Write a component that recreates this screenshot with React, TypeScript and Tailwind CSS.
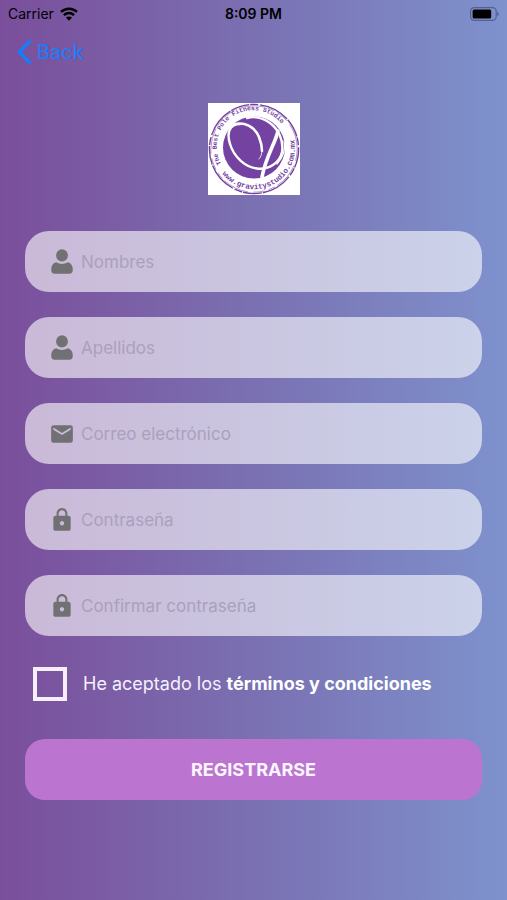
import { useState } from "react";
import type { ReactNode } from "react";
import { MdEmail, MdLock } from "react-icons/md";

function StatusBar() {
  return (
    <div className="grid h-7 grid-cols-3 items-center px-2 text-sm text-black">
      <div className="flex items-center gap-[6px]">
        <span>Carrier</span>
        <svg width="18" height="14" viewBox="0 0 18 14" fill="none" stroke="currentColor" strokeWidth="2.5">
          <path d="M1 4.9 C5.6 0.6 12.4 0.6 17 4.9" />
          <path d="M3.9 8.2 C6.9 5.4 11.1 5.4 14.1 8.2" />
          <path d="M9 13.8 L5.9 10.6 C7.7 9 10.3 9 12.1 10.6 Z" fill="currentColor" stroke="none" />
        </svg>
      </div>
      <span className="text-center font-semibold">8:09 PM</span>
      <svg className="justify-self-end" width="29" height="14" viewBox="0 0 29 14">
        <rect x="0.6" y="0.6" width="25.6" height="12.8" rx="3.6" fill="none" stroke="#56618f" strokeWidth="1.2" />
        <rect x="2.6" y="2.4" width="18.6" height="9.2" rx="1.6" fill="#000" />
        <path d="M27.2 4.8 C29.2 5.6 29.2 8.4 27.2 9.2 Z" fill="#56618f" />
      </svg>
    </div>
  );
}

function Logo() {
  return (
    <svg width="92" height="92" viewBox="0 0 92 92" role="img" aria-label="Gravity Studio">
      <defs>
        <path id="logo-top" d="M13.2 61 A36.5 36.5 0 1 1 79 29.6" />
        <path id="logo-bottom" d="M14.1 70.8 A41 41 0 0 0 81.5 24.5" />
      </defs>
      <rect width="92" height="92" fill="#fff" />
      <g fill="none" stroke="#7442a0">
        <circle cx="46" cy="46" r="44.6" strokeWidth="1.4" strokeDasharray="19 1 8 2 31 1" />
        <circle cx="46" cy="46" r="43.2" strokeWidth="0.8" strokeDasharray="12 5 26 3 7 4" opacity="0.7" />
      </g>
      <circle cx="46" cy="44.5" r="31" fill="#7442a0" />
      <g fill="none" stroke="#fff" strokeLinecap="round">
        <path d="M32 21 C20 21 19 32 22 41 C26 54 37 64 49 65.5 C62 67 72 59 74 49 C76 37 70 26 62 20 C55 15 46 13 39 15" strokeWidth="2.4" />
        <path d="M26 21.5 C36 18 47 24 51 34 C53 39 54 44 54 48" strokeWidth="2.6" />
        <path d="M54 46 C54 51 53 54 51 56" strokeWidth="0.8" />
        <path d="M70 28 C67 41 58 53 54 74" strokeWidth="3.6" />
        <path d="M69 61 C75 55 78 46 76 38" strokeWidth="1.2" />
      </g>
      <text fill="#7442a0" fontFamily="'Liberation Mono', monospace" fontWeight="700">
        <textPath href="#logo-top" fontSize="6.4">The Best Pole Fitness Studio</textPath>
        <textPath href="#logo-bottom" fontSize="7.6">www.gravitystudio.com.mx</textPath>
      </text>
    </svg>
  );
}

function PersonIcon() {
  return (
    <svg width="22" height="25" viewBox="0 0 22 25" fill="currentColor">
      <ellipse cx="11" cy="6.4" rx="5.9" ry="6.2" />
      <path d="M5.4 13.3 C8.8 15.4 13.2 15.4 16.6 13.3 C20 14 21.8 16.6 21.8 20.6 C21.8 23.6 20.7 24.8 18.2 24.8 H3.8 C1.3 24.8 0.2 23.6 0.2 20.6 C0.2 16.6 2 14 5.4 13.3 Z" />
    </svg>
  );
}

type FieldProps = {
  name: string;
  label: string;
  type?: string;
  icon: ReactNode;
};

function Field({ name, label, type = "text", icon }: FieldProps) {
  return (
    <div className="flex h-[61px] items-center gap-[6px] rounded-3xl bg-white/60 px-6">
      <label htmlFor={name} aria-label={label} className="flex w-[26px] shrink-0 justify-center text-[#717174]">
        {icon}
      </label>
      <input
        id={name}
        name={name}
        type={type}
        placeholder={label}
        className="min-w-0 flex-1 bg-transparent text-[17px] leading-6 text-gray-700 outline-none placeholder:text-[#aaa0bd]"
      />
    </div>
  );
}

export default function App() {
  const [accepted, setAccepted] = useState(false);

  return (
    <div className="min-h-screen bg-linear-to-r from-[#7a4e9b] via-[#7a70b2] to-[#7e92cd] font-[Inter,sans-serif]">
      <StatusBar />
      <header className="flex h-12 items-center pl-[17px]">
        <button type="button" className="flex items-center gap-[5px] text-xl text-[#147efb]">
          <svg width="15" height="26" viewBox="0 0 15 26" fill="none" stroke="currentColor" strokeWidth="3.4">
            <path d="M13.6 1.4 L2.4 13 L13.6 24.6" />
          </svg>
          Back
        </button>
      </header>

      <main className="px-[25px] pt-[27px]">
        <div className="flex justify-center">
          <Logo />
        </div>

        <form className="pt-9" onSubmit={(e) => e.preventDefault()}>
          <div className="flex flex-col gap-[25px]">
            <Field name="nombres" label="Nombres" icon={<PersonIcon />} />
            <Field name="apellidos" label="Apellidos" icon={<PersonIcon />} />
            <Field name="correo" label="Correo electrónico" type="email" icon={<MdEmail size={26} />} />
            <Field name="contrasena" label="Contraseña" type="password" icon={<MdLock size={26} />} />
            <Field name="confirmar" label="Confirmar contraseña" type="password" icon={<MdLock size={26} />} />
          </div>

          <div className="flex items-center gap-4 pl-2 pt-[31px]">
            <input
              id="terminos"
              type="checkbox"
              checked={accepted}
              onChange={(e) => setAccepted(e.target.checked)}
              className="size-[34px] shrink-0 appearance-none border-4 border-[#f6effb] checked:bg-[#bb75d0]"
            />
            <label htmlFor="terminos" className="text-lg text-[#f6f0fc]">
              He aceptado los <strong className="font-bold text-white">términos y condiciones</strong>
            </label>
          </div>

          <button
            type="submit"
            className="mt-[38px] h-[61px] w-full rounded-[20px] bg-[#bb75d0] text-lg font-bold text-[#fdf5ff]"
          >
            REGISTRARSE
          </button>
        </form>
      </main>
    </div>
  );
}
